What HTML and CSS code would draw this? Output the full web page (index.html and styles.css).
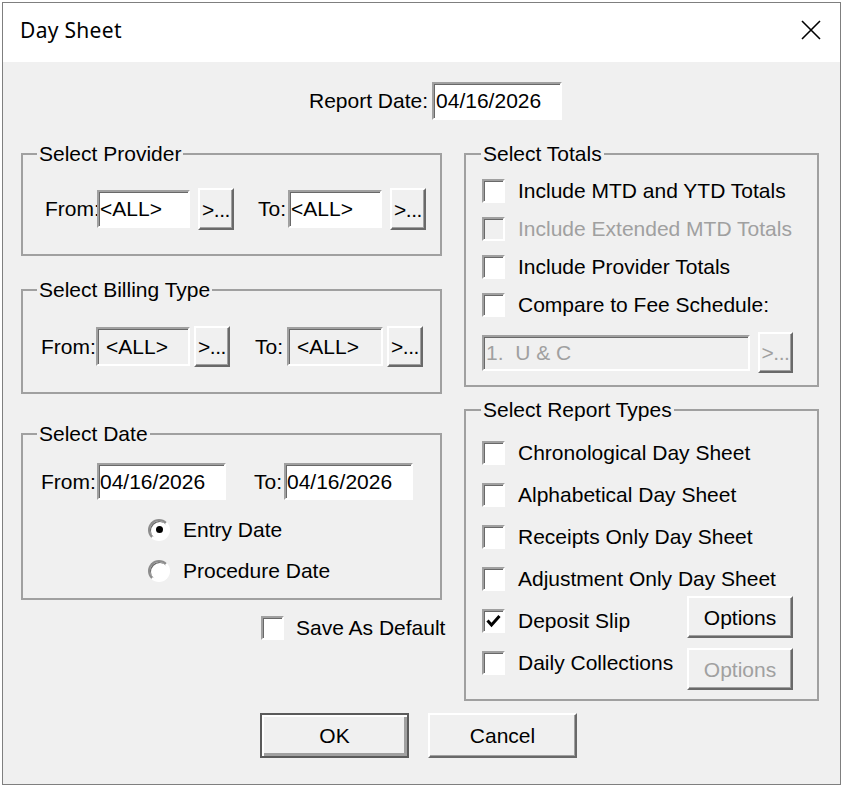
FILE: index.html
```html
<!DOCTYPE html>
<html lang="en">

<head>
    <meta charset="UTF-8">
    <meta name="viewport" content="width=device-width, initial-scale=1.0">
    <title>Day Sheet</title>
    <link rel="stylesheet" href="styles.css">
</head>

<body>
    <div class="dialog">
        <div class="titlebar">
            <span class="title">Day Sheet</span>
            <svg class="close" width="20" height="20" viewBox="0 0 20 20">
                <path d="M1 1 L19 19 M19 1 L1 19" stroke="#000" stroke-width="1.6" fill="none" />
            </svg>
        </div>

        <form class="client">
            <div class="report-row">
                <label>Report Date:</label>
                <input class="field report-date" type="text" value="04/16/2026">
            </div>

            <div class="columns">
                <div class="col-left">
                    <fieldset class="group provider">
                        <legend>Select Provider</legend>
                        <div class="range">
                            <span class="lbl from">From:</span>
                            <input class="field" type="text" value="<ALL>">
                            <button type="button" class="btn pick">&gt;...</button>
                            <span class="lbl to">To:</span>
                            <input class="field" type="text" value="<ALL>">
                            <button type="button" class="btn pick">&gt;...</button>
                        </div>
                    </fieldset>

                    <fieldset class="group billing">
                        <legend>Select Billing Type</legend>
                        <div class="range">
                            <span class="lbl from">From:</span>
                            <input class="field disabled" type="text" value="<ALL>" disabled>
                            <button type="button" class="btn pick">&gt;...</button>
                            <span class="lbl to">To:</span>
                            <input class="field disabled" type="text" value="<ALL>" disabled>
                            <button type="button" class="btn pick">&gt;...</button>
                        </div>
                    </fieldset>

                    <fieldset class="group dates">
                        <legend>Select Date</legend>
                        <div class="range">
                            <span class="lbl from">From:</span>
                            <input class="field" type="text" value="04/16/2026">
                            <span class="lbl to">To:</span>
                            <input class="field" type="text" value="04/16/2026">
                        </div>
                        <div class="radios">
                            <div class="option">
                                <span class="radio checked"></span>
                                <span>Entry Date</span>
                            </div>
                            <div class="option">
                                <span class="radio"></span>
                                <span>Procedure Date</span>
                            </div>
                        </div>
                    </fieldset>

                    <div class="option save-default">
                        <span class="check"></span>
                        <span>Save As Default</span>
                    </div>
                </div>

                <div class="col-right">
                    <fieldset class="group totals">
                        <legend>Select Totals</legend>
                        <div class="option">
                            <span class="check"></span>
                            <span>Include MTD and YTD Totals</span>
                        </div>
                        <div class="option off">
                            <span class="check"></span>
                            <span>Include Extended MTD Totals</span>
                        </div>
                        <div class="option">
                            <span class="check"></span>
                            <span>Include Provider Totals</span>
                        </div>
                        <div class="option">
                            <span class="check"></span>
                            <span>Compare to Fee Schedule:</span>
                        </div>
                        <div class="fee-row">
                            <input class="field fee" type="text" value="1.  U &amp; C" disabled>
                            <button type="button" class="btn pick off">&gt;...</button>
                        </div>
                    </fieldset>

                    <fieldset class="group reports">
                        <legend>Select Report Types</legend>
                        <div class="option">
                            <span class="check"></span>
                            <span>Chronological Day Sheet</span>
                        </div>
                        <div class="option">
                            <span class="check"></span>
                            <span>Alphabetical Day Sheet</span>
                        </div>
                        <div class="option">
                            <span class="check"></span>
                            <span>Receipts Only Day Sheet</span>
                        </div>
                        <div class="option">
                            <span class="check"></span>
                            <span>Adjustment Only Day Sheet</span>
                        </div>
                        <div class="option">
                            <span class="check checked">
                                <svg width="19" height="20" viewBox="0 0 19 20">
                                    <path d="M3.5 9.5 L7.5 14 L15.5 5" stroke="#000" stroke-width="3" fill="none" />
                                </svg>
                            </span>
                            <span>Deposit Slip</span>
                            <button type="button" class="btn options first">Options</button>
                        </div>
                        <div class="option">
                            <span class="check"></span>
                            <span>Daily Collections</span>
                            <button type="button" class="btn options second off">Options</button>
                        </div>
                    </fieldset>
                </div>
            </div>

            <div class="actions">
                <button type="button" class="btn action default">OK</button>
                <button type="button" class="btn action">Cancel</button>
            </div>
        </form>
    </div>
</body>

</html>
```

FILE: styles.css
```css
* {
    box-sizing: border-box;
    margin: 0;
}

body {
    width: 843px;
    height: 786px;
    overflow: hidden;
    background: #fff;
    font-family: 'Liberation Sans', Arial, sans-serif;
    font-size: 21px;
    color: #000;
    white-space: nowrap;
}

.dialog {
    margin: 2px 2px 0;
    height: 783px;
    border: 1px solid #7f7f7f;
    background: #f0f0f0;
    display: flex;
    flex-direction: column;
}

.titlebar {
    height: 59px;
    background: #fff;
    display: flex;
    align-items: center;
    justify-content: space-between;
    padding: 0 19px 6px 17px;
}

.title {
    font-family: 'Noto Sans', sans-serif;
    font-size: 21px;
    letter-spacing: 0.3px;
}

.client {
    padding: 20px 0 0 18px;
}

input,
button {
    font-family: inherit;
    font-size: 21px;
    color: #000;
}

.field {
    height: 38px;
    padding: 0 0 0 1px;
    background: #fff;
    border: 2px solid;
    border-color: #a0a0a0 #fff #fff #a0a0a0;
    box-shadow: inset 1px 1px 0 #696969;
    outline: none;
}

.field.disabled {
    background: #f0f0f0;
    color: #000;
    padding-left: 8px;
}

.btn {
    padding: 0;
    background: #f0f0f0;
    border: 2px solid;
    border-color: #fff #696969 #696969 #fff;
    box-shadow: inset -1px -1px 0 #a0a0a0;
    line-height: 1;
}

.btn.off {
    color: #a0a0a0;
}

.report-row {
    display: flex;
    align-items: center;
    padding-left: 288px;
}

.report-row label {
    margin-right: 4px;
}

.report-date {
    width: 130px;
    padding-left: 2px;
}

.columns {
    display: flex;
    gap: 22px;
    margin-top: 22px;
}

.col-left {
    width: 421px;
}

.col-right {
    width: 355px;
}

.group {
    border: 2px solid #a0a0a0;
    padding: 0;
    min-width: 0;
}

.group legend {
    margin-left: 14px;
    padding: 0 2px;
    line-height: 24px;
}

.range {
    display: flex;
    align-items: center;
    height: 42px;
}

.lbl {
    flex: none;
}

.pick {
    width: 36px;
    height: 42px;
    letter-spacing: -0.5px;
}

.provider .range {
    margin: 22px 0 24px;
    padding-left: 22px;
}

.provider .from { width: 52px; }
.provider .field { width: 93px; }
.provider .pick { margin-left: 8px; }
.provider .to { width: 30px; margin-left: 24px; }
.provider .to + .field { width: 94px; }

.billing {
    margin-top: 22px;
}

.billing .range {
    margin: 24px 0 25px;
    padding-left: 18px;
    height: 41px;
}

.billing .from { width: 55px; }
.billing .field { width: 94px; height: 39px; }
.billing .to + .field { width: 96px; }
.billing .pick { margin-left: 4px; height: 41px; }
.billing .to { width: 32px; margin-left: 25px; }

.dates {
    margin-top: 28px;
}

.dates .range {
    margin-top: 17px;
    padding-left: 18px;
    height: 37px;
}

.dates .from { width: 56px; }
.dates .field { width: 129px; height: 37px; }
.dates .to { width: 30px; margin-left: 28px; }

.radios {
    margin: 9px 0 7px;
    padding-left: 125px;
}

.radios .option {
    height: 41px;
}

.option {
    display: flex;
    align-items: center;
}

.radio {
    width: 22px;
    height: 22px;
    margin-right: 13px;
    border-radius: 50%;
    border: 2px solid;
    border-color: #8c8c8c #fff #fff #8c8c8c;
    background: #fff;
    box-shadow: inset 1px 1px 0 #696969;
    display: flex;
    align-items: center;
    justify-content: center;
}

.radio.checked::after {
    content: '';
    width: 7px;
    height: 7px;
    border-radius: 50%;
    background: #000;
}

.check {
    flex: none;
    width: 23px;
    height: 24px;
    margin-right: 13px;
    border: 2px solid;
    border-color: #a0a0a0 #fff #fff #a0a0a0;
    box-shadow: inset 1px 1px 0 #696969;
    background: #fff;
    display: flex;
    align-items: center;
    justify-content: center;
}

.save-default {
    height: 30px;
    margin-top: 13px;
    padding-left: 240px;
}

.save-default .check {
    margin-right: 12px;
}

.totals {
    padding: 6px 0 12px 16px;
}

.totals legend,
.reports legend {
    margin-left: -1px;
}

.totals .option {
    height: 38px;
}

.option.off {
    color: #a0a0a0;
}

.option.off .check {
    background: #f0f0f0;
}

.fee-row {
    display: flex;
    align-items: center;
    height: 41px;
    margin-top: 8px;
}

.field.fee {
    width: 268px;
    height: 36px;
    background: #f0f0f0;
    color: #a0a0a0;
    padding-left: 2px;
    white-space: pre;
}

.fee-row .pick {
    width: 35px;
    height: 41px;
    margin-left: 8px;
}

.reports {
    margin-top: 11px;
    padding: 10px 24px 15px 16px;
}

.reports .option {
    height: 42px;
}

.options {
    margin-left: auto;
    width: 106px;
    height: 42px;
}

.options.first {
    margin-bottom: 8px;
}

.options.second {
    margin-top: 12px;
}

.actions {
    display: flex;
    gap: 19px;
    margin-top: 12px;
    padding-left: 239px;
}

.action {
    width: 149px;
    height: 45px;
}

.action.default {
    border: 2px solid #5a5a5a;
    box-shadow: inset 2px 2px 0 #fff, inset -3px -3px 0 #a0a0a0;
}
```
